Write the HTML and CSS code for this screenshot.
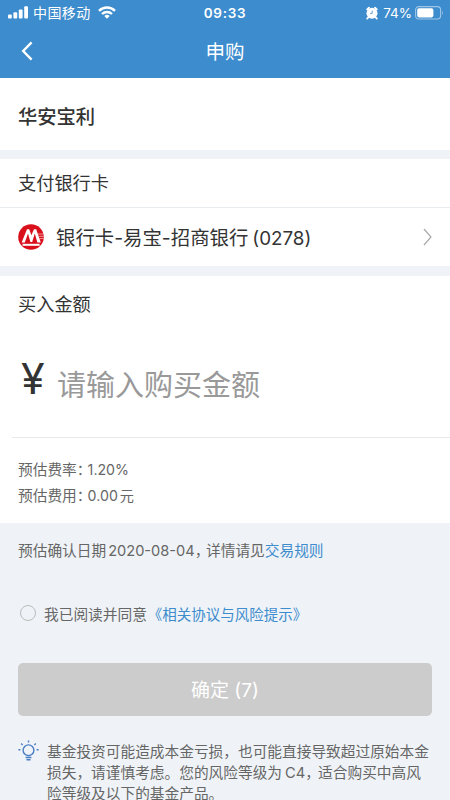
FILE: index.html
```html
<!DOCTYPE html>
<html lang="zh-CN">
<head>
<meta charset="utf-8">
<title>申购</title>
<link rel="stylesheet" href="styles.css">
</head>
<body>
<header class="header">
  <div class="status">
    <div class="status-left">
      <svg class="signal" width="21" height="13" viewBox="0 0 21 13" fill="#fff"><rect x="0" y="8.5" width="3.8" height="4" rx="1"/><rect x="5.4" y="6.3" width="3.8" height="6.2" rx="1"/><rect x="10.8" y="3.5" width="3.8" height="9" rx="1"/><rect x="16.2" y="0.2" width="3.8" height="12.3" rx="1"/></svg>
      <span class="carrier">中国移动</span>
      <svg width="18" height="13" viewBox="0 0 18 13" fill="none" stroke="#fff" stroke-width="2.4"><path d="M1 4.8a11.5 11.5 0 0 1 16 0M4 8a7.2 7.2 0 0 1 10 0"/><path d="M9 12.8 6.3 10.1a3.8 3.8 0 0 1 5.4 0Z" fill="#fff" stroke="none"/></svg>
    </div>
    <span class="time">09:33</span>
    <div class="status-right">
      <svg width="12" height="14" viewBox="0 0 12 14"><path d="M1.2 3.4 3 1.6M9 1.6l1.8 1.8M2.3 11.2 1.2 12.6M9.7 11.2l1.1 1.4" stroke="#fff" stroke-width="1.8" stroke-linecap="round"/><circle cx="6" cy="7.2" r="5.5" fill="#fff"/><path d="M6.2 4.6v2.8H4" fill="none" stroke="#3d8ccd" stroke-width=".8"/></svg>
      <span class="percent">74%</span>
      <svg class="battery" width="29" height="14" viewBox="0 0 29 14"><rect x=".6" y=".6" width="25" height="12.4" rx="3.2" fill="none" stroke="#9fc6e8" stroke-width="1.1"/><rect x="2.2" y="2.2" width="16.2" height="9.2" rx="1.8" fill="#fff"/><path d="M27 4.6q1.6 2.2 0 4.4Z" fill="#9fc6e8"/></svg>
    </div>
  </div>
  <nav class="nav">
    <svg class="back" width="12" height="20" viewBox="0 0 12 20" fill="none" stroke="#fff" stroke-width="2.4"><path d="M10.6 1.4 2.2 10l8.4 8.6"/></svg>
    <h1 class="title">申购</h1>
  </nav>
</header>
<main>
  <section class="fund">华安宝利</section>
  <section class="bank">
    <div class="label">支付银行卡</div>
    <div class="bank-row">
      <svg width="26" height="26" viewBox="0 0 26 26"><circle cx="13" cy="13" r="12.8" fill="#d9101c"/><path d="M3.6 18.4 9 5.2h2.2l2.2 6 2.6-6h2.2l4.6 13.2h-3.4L16.8 9.4l-2.6 8.6h-1.8L10 9.4 6.8 18.4Z" fill="#fff"/><path d="M4.6 20.8h17" stroke="#fff" stroke-width="2"/><path d="M19.8 10h5.5M20.5 12.3h5.2M21.2 14.6h4.4" stroke="#f2a7aa" stroke-width=".9"/></svg>
      <span class="bank-name">银行卡-易宝-招商银行<span class="tail">(0278)</span></span>
      <svg class="arrow" width="9" height="18" viewBox="0 0 9 18" fill="none" stroke="#aaa" stroke-width="1.2"><path d="m1 1 7 8-7 8"/></svg>
    </div>
  </section>
  <section class="amount">
    <div class="amount-label">买入金额</div>
    <div class="amount-input"><span class="yen">¥</span><span class="placeholder">请输入购买金额</span></div>
    <div class="fees">
      <p><span>预估费率</span><span class="colon">：</span><span class="rate">1.20%</span></p>
      <p><span>预估费用</span><span class="colon">：</span><span class="rate">0.00</span><span class="unit">元</span></p>
    </div>
  </section>
  <p class="confirm"><span>预估确认日期</span><span class="date">2020-08-04</span><span class="comma">，</span><span>详情请见</span><a class="link">交易规则</a></p>
  <div class="agree"><span class="radio"></span><span class="agree-text">我已阅读并同意</span><a class="link agree-link">《相关协议与风险提示》</a></div>
  <div class="submit">确定 (7)</div>
  <div class="tip">
    <svg width="21" height="22" viewBox="0 0 21 22" fill="none" stroke="#4a7dc4" stroke-width="1.4"><circle cx="10.5" cy="10.3" r="5.4"/><path d="M7.6 17.5h5.8M8.5 19.8h4M10.5.6v2M3.2 3.6l1.4 1.4M17.8 3.6 16.4 5M.4 9.8h2M18.6 9.8h2"/></svg>
    <p class="tip-text">基金投资可能造成本金亏损，也可能直接导致超过原始本金<br>损失，请谨慎考虑。您的风险等级为<span class="level">C4</span><span class="comma wide">，</span>适合购买中高风<br>险等级及以下的基金产品。</p>
  </div>
</main>
</body>
</html>
```
FILE: styles.css
```css
* { box-sizing: border-box; }
body {
  margin: 0;
  height: 800px;
  overflow: hidden;
  background: #eff3f7;
  color: #333;
  font-family: Inter, "Noto Sans CJK SC", sans-serif;
}
p, h1 { margin: 0; }
svg { display: block; flex: none; }
.header { height: 78px; background: #3d8ccd; color: #fff; }
.status {
  height: 25px;
  padding: 0 7px 0 8px;
  display: grid;
  grid-template-columns: 1fr auto 1fr;
  align-items: center;
}
.status-left, .status-right { display: flex; align-items: center; }
.status-right { justify-content: flex-end; }
.signal { margin-right: 4px; }
.carrier { font-size: 14px; letter-spacing: .4px; line-height: 24px; margin-right: 7px; }
.time { margin-left: -1px; font-size: 13.5px; font-weight: 600; letter-spacing: .7px; }
.percent { font-size: 13.5px; margin: 0 3px 0 5px; }
.battery { margin-right: -1px; }
.nav {
  height: 53px;
  padding: 0 21px;
  display: grid;
  grid-template-columns: 12px 1fr 12px;
  align-items: center;
}
.title { text-align: center; font-size: 19.5px; font-weight: 400; line-height: 30px; }
.back { margin-top: -1px; }
.fund {
  height: 72px;
  padding-left: 18px;
  background: #fff;
  font-size: 19.3px;
  font-weight: 500;
  line-height: 78px;
}
.bank { margin-top: 9px; background: #fff; }
.label {
  height: 49px;
  padding-left: 18px;
  border-bottom: 1px solid #e9ecef;
  font-size: 18.2px;
  line-height: 49px;
}
.bank-row { height: 58px; display: flex; align-items: center; padding: 0 18px; }
.bank-name { flex: 1; padding-top: 2px; margin-left: 12px; font-size: 19.4px; line-height: 30px; white-space: nowrap; }
.tail { margin-left: 4px; font-size: 18.8px; }
.amount { height: 247px; margin-top: 10px; background: #fff; }
.amount-label { height: 55px; padding-left: 18px; font-size: 18.2px; line-height: 57px; }
.amount-input {
  height: 107px;
  margin-left: 12px;
  padding-left: 9px;
  border-bottom: 1px solid #e8e8e8;
  display: flex;
  align-items: flex-start;
}
.yen { width: 36px; padding-top: 16px; font-size: 43px; line-height: 62px; }
.placeholder { padding-top: 33px; font-size: 29px; line-height: 44px; color: #999; }
.fees { padding: 19px 18px 0; font-size: 14.7px; line-height: 25px; color: #666; }
.colon { margin-right: 3.5px; font-feature-settings: "halt"; }
.rate { font-size: 14.2px; }
.unit { margin-left: 2px; font-size: 14.2px; }
.confirm { margin-top: 16px; padding-left: 18px; font-size: 14.7px; line-height: 25px; color: #666; white-space: nowrap; }
.date { margin-left: 2px; font-size: 14.6px; }
.comma { margin-right: 4px; font-feature-settings: "halt"; }
.wide { margin-right: 5.5px; }
.link { color: #3d8ccd; }
.agree { height: 24px; margin-top: 37px; padding-left: 20px; display: flex; align-items: center; font-size: 14.7px; color: #666; white-space: nowrap; }
.agree-link { margin-left: 1px; font-size: 14.5px; }
.radio { width: 16px; height: 16px; margin-right: 8px; border: 1px solid #bbb; border-radius: 50%; }
.submit {
  height: 53px;
  margin: 38px 18px 0;
  border-radius: 5px;
  background: #ccc;
  color: #fff;
  font-size: 19px;
  line-height: 55px;
  text-align: center;
}
.tip { display: flex; align-items: flex-start; margin-top: 24px; padding-left: 18px; }
.tip-text { margin-left: 8px; padding-top: 2px; font-size: 14.7px; line-height: 21px; color: #666; white-space: nowrap; }
.level { margin: 0 0 0 3px; }
```
